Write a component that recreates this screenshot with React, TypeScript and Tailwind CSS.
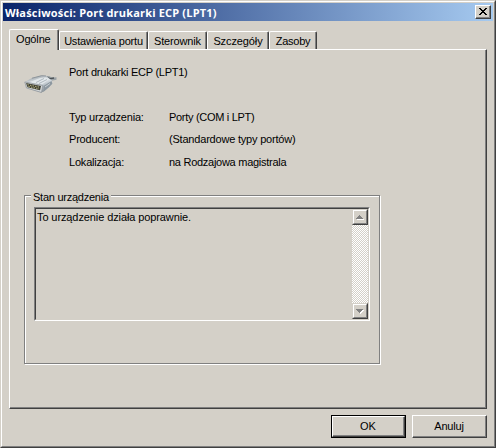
import React from 'react';

const raised = 'border border-t-white border-l-white border-r-[#404040] border-b-[#404040]';

const tabs = [
  { label: 'Ustawienia portu', width: 'w-[89px]', tracking: 'tracking-[-0.2px]' },
  { label: 'Sterownik', width: 'w-[59px]', tracking: 'tracking-[-0.15px]' },
  { label: 'Szczegóły', width: 'w-[62px]', tracking: 'tracking-[-0.1px]' },
  { label: 'Zasoby', width: 'w-[48px]', tracking: 'tracking-[-0.25px]' },
];

const details = [
  { label: 'Typ urządzenia:', value: 'Porty (COM i LPT)', height: 'h-[22px]', tracking: 'tracking-[-0.3px]' },
  { label: 'Producent:', value: '(Standardowe typy portów)', height: 'h-[23px]', tracking: 'tracking-[-0.2px]' },
  { label: 'Lokalizacja:', value: 'na Rodzajowa magistrala', height: 'h-[23px]', tracking: 'tracking-[-0.27px]' },
];

const ScrollButton = ({ down = false }: { down?: boolean }) => (
  <div className="w-4 h-4 border border-t-[#d4d0c8] border-l-[#d4d0c8] border-r-[#404040] border-b-[#404040] bg-[#d4d0c8]">
    <div className="w-full h-full border border-t-white border-l-white border-r-[#808080] border-b-[#808080]">
      <svg width="12" height="12" viewBox="0 0 12 12" shapeRendering="crispEdges">
        {down ? (
          <>
            <path d="M3 5h7v1H9v1H8v1H7v1H6V8H5V7H4V6H3z" fill="#fff" />
            <path d="M2 4h7v1H8v1H7v1H6v1H5V7H4V6H3V5H2z" fill="#808080" />
          </>
        ) : (
          <>
            <path d="M3 8h7v1H3z" fill="#fff" />
            <path d="M5 4h1v1h1v1h1v1h1v1H2V7h1V6h1V5h1z" fill="#808080" />
          </>
        )}
      </svg>
    </div>
  </div>
);

const DeviceIcon = () => (
  <svg width="34" height="20" viewBox="0 0 34 20" className="block">
    <defs>
      <linearGradient id="shell" x1="0.2" y1="0" x2="0.6" y2="1">
        <stop offset="0" stopColor="#8a9298" />
        <stop offset="0.4" stopColor="#dfe5e9" />
        <stop offset="0.7" stopColor="#b3bbc1" />
        <stop offset="1" stopColor="#8c949a" />
      </linearGradient>
    </defs>
    {/* cable */}
    <path d="M21 1.500l4-.5 3 1.500 4.500-.3v2.600l-5 1-4-.5z" fill="#9ba2a6" />
    <path d="M22 2l4 1.600 4-.6" stroke="#4c5256" strokeWidth="1.400" fill="none" />
    {/* housing */}
    <path d="M.8 7L8 3l9.500-2.500L22 .8l6 5 .3 3-3.500 3.500-5.300 4.500-2.500.8L2.500 13z" fill="url(#shell)" />
    <path d="M8 3.200l9.500-2.500 4.500.3" stroke="#858d93" strokeWidth=".8" fill="none" />
    <path d="M6 7l10-4 6-.5 3 2-7 5z" fill="#e6ebee" opacity=".8" />
    <path d="M12 7.500l8-4M15 8.500l8-4" stroke="#a1aab1" strokeWidth=".8" fill="none" />
    <path d="M19.500 11l8-5 .8 2.800-3.500 3.500-5 4.200z" fill="#8d979f" />
    <path d="M21 12l5-3.500" stroke="#c8d0d5" strokeWidth="1" />
    {/* socket */}
    <path d="M.8 7l18 3.500-1.300 7L2.500 13z" fill="#d3d7d9" stroke="#8b9196" strokeWidth=".7" />
    <path d="M2 8l15 3-1 4.300L3.500 12.200z" fill="#3f4034" />
    <path d="M3.500 9.700l12 2.500M4.500 11.500l10.500 2.300" stroke="#cfcb91" strokeWidth=".9" strokeDasharray="1.300 1.300" />
  </svg>
);

const App: React.FC = () => (
  <div className="w-[496px] h-[448px] bg-[#d4d0c8] border border-t-[#d4d0c8] border-l-[#d4d0c8] border-r-[#404040] border-b-[#404040] font-['Liberation_Sans',Arial,sans-serif] text-[11px] leading-[13px] text-black whitespace-nowrap overflow-hidden cursor-default select-none">
    <div className="w-full h-full p-px border border-t-white border-l-white border-r-[#808080] border-b-[#808080]">
      {/* TITLE BAR */}
      <div className="w-[490px] h-[18px] flex items-center justify-between pl-0.5 pr-0.5 bg-[linear-gradient(90deg,#0a246a,#a6caf0)]">
        <span className="font-['Open_Sans',sans-serif] font-bold text-[11px] text-white tracking-[0.18px]">Właściwości: Port drukarki ECP (LPT1)</span>
        <button className={`w-4 h-3.5 bg-[#d4d0c8] ${raised}`} aria-label="Zamknij">
          <div className="w-full h-full border-r border-b border-[#808080]">
            <svg width="13" height="11" viewBox="0 0 13 11" shapeRendering="crispEdges">
              <path d="M3 2h2v1h1v1h2V3h1V2h2v1h-1v1H9v1H8v1h1v1h1v1h1v1H9V8H8V7H6v1H5v1H3V8h1V7h1V6h1V5H5V4H4V3H3z" fill="#000" />
            </svg>
          </div>
        </button>
      </div>

      {/* TABS */}
      <div className="flex items-end h-7 ml-1.5">
        <div className="z-10 w-[50px] h-[21px] -mb-px rounded-t-[2px] border border-b-0 border-t-white border-l-white border-r-[#404040] bg-[#d4d0c8]">
          <div className="h-full border-r border-[#808080] pl-1.5 pt-[3px] tracking-[-0.15px]">Ogólne</div>
        </div>
        {tabs.map((tab) => (
          <div key={tab.label} className={`${tab.width} h-[18px] rounded-t-[2px] border border-b-0 border-t-white border-l-white border-r-[#404040]`}>
            <div className={`h-full border-r border-[#808080] pt-[3px] pl-px text-center ${tab.tracking}`}>{tab.label}</div>
          </div>
        ))}
      </div>

      <div className={`ml-1.5 w-[478px] h-[360px] ${raised}`}>
        <div className="w-full h-full border-r border-b border-[#808080] pt-4 pl-3.5">
          <div className="flex h-[45px]">
            <div className="w-[45px] pt-[9px]"><DeviceIcon /></div>
            <span className="tracking-[-0.25px]">Port drukarki ECP (LPT1)</span>
          </div>
          <div className="pl-[45px] h-[84px]">
            {details.map((row) => (
              <div key={row.label} className={`flex ${row.height}`}>
                <span className="w-[100px] tracking-[-0.2px]">{row.label}</span>
                <span className={row.tracking}>{row.value}</span>
              </div>
            ))}
          </div>

          {/* DEVICE STATUS */}
          <div className="w-[356px] h-[169px] border border-[#808080] shadow-[1px_1px_0_#fff,inset_1px_1px_0_#fff]">
            <div className="w-fit ml-1.5 -mt-[5px] px-0.5 h-[13px] bg-[#d4d0c8] tracking-[-0.25px]">Stan urządzenia</div>
            <div className="ml-[9px] mt-[3px] w-[336px] h-[114px] border border-t-[#808080] border-l-[#808080] border-r-white border-b-white">
              <div className="w-full h-full flex justify-between border border-t-[#404040] border-l-[#404040] border-r-[#d4d0c8] border-b-[#d4d0c8]">
                <span className="pl-px pt-0.5 tracking-[-0.1px]">To urządzenie działa poprawnie.</span>
                <div className="w-4 flex flex-col justify-between bg-[repeating-conic-gradient(#fff_0_25%,#d4d0c8_0_50%)] bg-[length:2px_2px]">
                  <ScrollButton />
                  <ScrollButton down />
                </div>
              </div>
            </div>
          </div>
        </div>
      </div>

      {/* ACTIONS */}
      <div className="flex justify-end gap-1.5 pt-1.5 pr-1.5">
        <button className="w-[75px] h-[23px] border border-black">
          <div className={`w-full h-full ${raised}`}>
            <div className="w-full h-full border-r border-b border-[#808080] pt-[3px]">OK</div>
          </div>
        </button>
        <button className={`w-[75px] h-[23px] ${raised}`}>
          <div className="w-full h-full border-r border-b border-[#808080] pt-1 tracking-[-0.2px]">Anuluj</div>
        </button>
      </div>
    </div>
  </div>
);

export default App;
